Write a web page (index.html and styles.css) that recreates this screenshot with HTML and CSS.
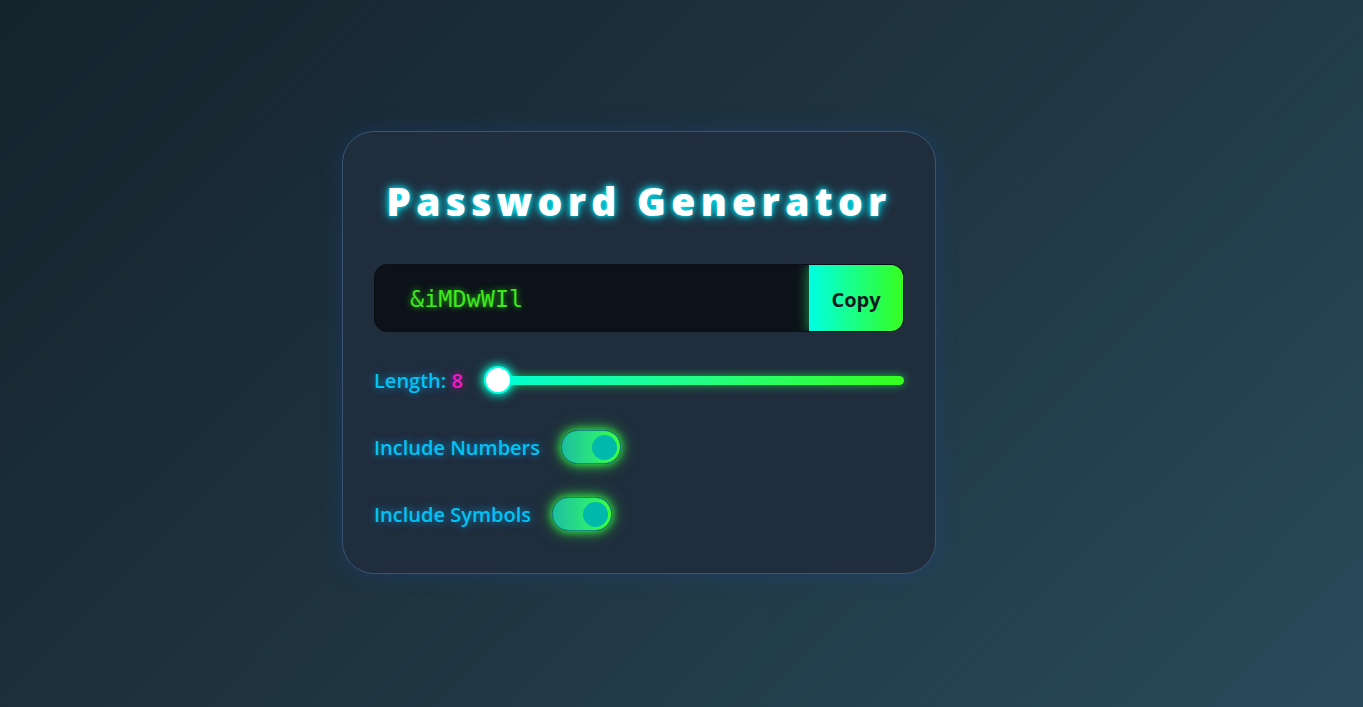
FILE: index.html
```html
<!DOCTYPE html>
<html lang="en">
<head>
<meta charset="UTF-8">
<title>Password Generator</title>
<link rel="stylesheet" href="styles.css">
</head>
<body>
<main class="card">
  <h1 class="title">Password Generator</h1>
  <div class="output">
    <span class="password">&amp;iMDwWIl</span>
    <button class="copy">Copy</button>
  </div>
  <div class="row length-row">
    <span class="label">Length: <span class="num">8</span></span>
    <div class="slider">
      <div class="track"></div>
      <div class="thumb"></div>
    </div>
  </div>
  <div class="row">
    <span class="label">Include Numbers</span>
    <span class="toggle"><span class="knob"></span></span>
  </div>
  <div class="row">
    <span class="label">Include Symbols</span>
    <span class="toggle"><span class="knob"></span></span>
  </div>
</main>
</body>
</html>
```
FILE: styles.css
```css
* { box-sizing: border-box; }
html, body { height: 100%; }
body {
  margin: 0;
  min-height: 100vh;
  background: linear-gradient(135deg, #15232c 0%, #1f3540 50%, #294b5c 100%);
  font-family: "Open Sans", "Noto Sans", sans-serif;
  display: flex;
  align-items: flex-start;
  padding: 131px 0 0 342px;
}
.card {
  width: 594px;
  height: 443px;
  background: #1f2d3d;
  border: 1px solid #3a5571;
  border-radius: 32px;
  padding: 30px 31px 0;
  box-shadow: 0 0 22px rgba(30, 70, 170, 0.3);
  display: flex;
  flex-direction: column;
}
.title {
  margin: 14px 0 0;
  text-align: center;
  font-family: "Open Sans", sans-serif;
  font-weight: 800;
  font-size: 39px;
  letter-spacing: 5.3px;
  line-height: 50px;
  color: #ffffff;
  text-shadow: 0 0 5px #00f0ff, 0 0 12px #00d8e8;
}
.output {
  margin-top: 38px;
  height: 68px;
  background: #0c1219;
  border-radius: 13px;
  display: flex;
  align-items: center;
  overflow: hidden;
  border: 1px solid #0a0f15;
}
.password {
  flex: 1;
  padding-left: 35px;
  font-family: "DejaVu Sans Mono", monospace;
  font-size: 23.5px;
  color: #3de81c;
  text-shadow: 0 0 6px rgba(60, 230, 30, 0.8);
  padding-top: 2px;
}
.copy {
  width: 94px;
  height: 100%;
  border: none;
  background: linear-gradient(90deg, #00ffe4 0%, #36ff20 100%);
  font-family: "Open Sans", sans-serif;
  font-weight: 700;
  font-size: 20px;
  color: #111a22;
  padding: 2px 0 0;
  box-shadow: 0 0 12px rgba(40, 255, 120, 0.6);
}
.row {
  display: flex;
  align-items: center;
  gap: 21px;
  height: 34px;
}
.length-row {
  margin-top: 31px;
}
.row + .row { margin-top: 33px; }
.label {
  font-size: 20px;
  font-weight: 600;
  color: #00c3f5;
  text-shadow: 0 0 8px rgba(0, 180, 255, 0.7);
  white-space: nowrap;
}
.num { color: #ff14c8; text-shadow: 0 0 8px rgba(255, 0, 200, 0.6); }
.slider {
  position: relative;
  flex: 1;
  height: 28px;
  display: flex;
  align-items: center;
}
.track {
  width: 100%;
  height: 9px;
  border-radius: 5px;
  background: linear-gradient(90deg, #00ffd8 0%, #22ff88 50%, #36ff1e 100%);
  box-shadow: 0 0 10px rgba(40, 255, 90, 0.65);
}
.thumb {
  position: absolute;
  left: 0;
  top: 0;
  width: 28px;
  height: 28px;
  border-radius: 50%;
  background: #ffffff;
  border: 2px solid #00ffe0;
  box-shadow: 0 0 8px #00ffe0, 0 0 14px rgba(0, 255, 200, 0.6);
}
.toggle {
  width: 60px;
  height: 34px;
  border-radius: 17px;
  background: linear-gradient(90deg, #1cbfa0 0%, #2ae67a 55%, #3cff36 100%);
  border: 1px solid #138a7c;
  box-shadow: 0 0 10px #33ff44, 0 0 18px rgba(50, 255, 60, 0.55);
  display: flex;
  align-items: center;
  justify-content: flex-end;
  padding-right: 3px;
}
.knob {
  width: 25px;
  height: 25px;
  border-radius: 50%;
  background: #00b9ab;
}
```
